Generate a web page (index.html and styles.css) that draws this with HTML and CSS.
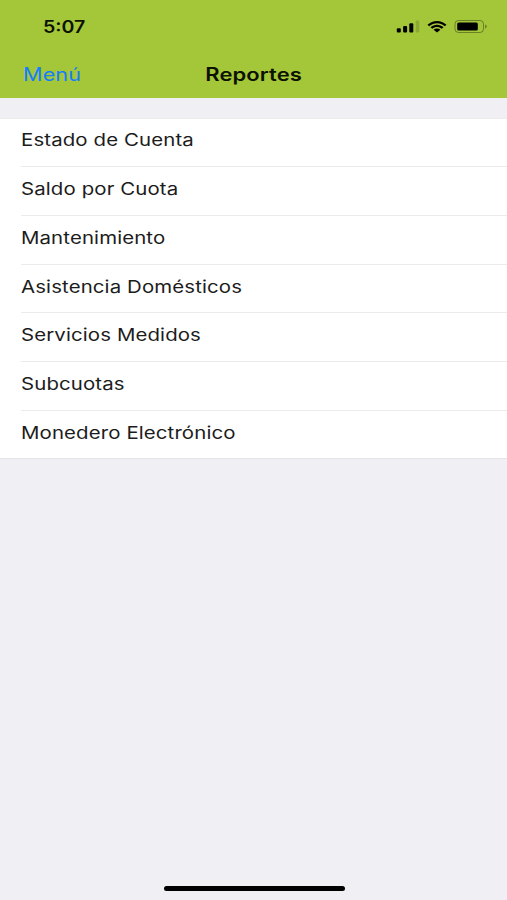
FILE: index.html
```html
<!DOCTYPE html>
<html lang="es">
  <head>
    <meta charset="UTF-8" />
    <meta name="viewport" content="width=device-width, initial-scale=1.0" />
    <title>Reportes</title>
    <link rel="stylesheet" href="styles.css">
  </head>
  <body>
    <header class="header">
      <div class="status-bar">
        <span class="time"><span class="label">5:07</span></span>
        <div class="status-icons">
          <svg class="signal" width="24" height="13" viewBox="0 0 24 13">
            <rect x="0.8" y="8.2" width="4" height="4.2" rx="1" />
            <rect x="7.1" y="6" width="4" height="6.4" rx="1" />
            <rect x="13.3" y="3.2" width="4" height="9.2" rx="1" />
            <rect x="19.7" y="0.6" width="3.6" height="11.8" rx="1" opacity="0.15" />
          </svg>
          <svg class="wifi" width="20" height="13" viewBox="0 0 20 12">
            <path d="M0.5 4.2C5.8-0.9 14.2-0.9 19.5 4.2L17.8 5.7C13.4 1.6 6.6 1.6 2.2 5.7Z" />
            <path d="M3.5 6.8C7.1 3.4 12.9 3.4 16.5 6.8L14.7 8.3C12 5.9 8 5.9 5.3 8.3Z" />
            <path d="M6.6 9.3C8.4 7.7 11.6 7.7 13.4 9.3L10 12Z" />
          </svg>
          <svg class="battery" width="34" height="13" viewBox="0 0 34 13">
            <rect x="1" y="0.5" width="28.5" height="12" rx="3.5" fill="none" stroke="#000" stroke-opacity="0.35" />
            <rect x="3.2" y="2.5" width="20.6" height="8" rx="1.5" />
            <path d="M31 4.5C33.3 5 33.3 8 31 8.5Z" opacity="0.35" />
          </svg>
        </div>
      </div>
      <nav class="nav-bar">
        <a href="#" class="back"><span class="label">Menú</span></a>
        <h1 class="title"><span class="label">Reportes</span></h1>
      </nav>
    </header>

    <ul class="list">
      <li><span class="label">Estado de Cuenta</span></li>
      <li><span class="label">Saldo por Cuota</span></li>
      <li><span class="label">Mantenimiento</span></li>
      <li><span class="label">Asistencia Domésticos</span></li>
      <li><span class="label">Servicios Medidos</span></li>
      <li><span class="label">Subcuotas</span></li>
      <li><span class="label">Monedero Electrónico</span></li>
    </ul>

    <div class="home-indicator"></div>
  </body>
</html>
```
FILE: styles.css
```css
* {
  box-sizing: border-box;
}

body {
  display: flex;
  flex-direction: column;
  height: 900px;
  margin: 0;
  background-color: #efeff4;
  font-family: Inter, "Liberation Sans", sans-serif;
  font-size: 17px;
  color: #1c1c1c;
}

.label {
  display: inline-block;
  letter-spacing: 0.1px;
  transform: scaleX(1.2);
  transform-origin: left center;
  white-space: nowrap;
}

.header {
  height: 98px;
  background-color: #a4c639;
}

.status-bar {
  display: flex;
  justify-content: space-between;
  height: 50px;
  padding: 16px 19px 0 43px;
}

.time {
  font-size: 17px;
  font-weight: 600;
  line-height: 22px;
  color: #0c1200;
}

.time .label {
  letter-spacing: 0;
  transform: scaleX(1.15);
}

.status-icons {
  display: flex;
  align-items: center;
  gap: 7px;
  height: 21px;
}

.nav-bar {
  display: grid;
  grid-template-columns: 1fr auto 1fr;
  align-items: center;
  height: 48px;
  padding: 1px 23px 0;
}

.back {
  font-size: 18px;
  color: #157efb;
  text-decoration: none;
}

.title {
  margin: 0;
  font-size: 18px;
  font-weight: 600;
  color: #0c1200;
}

.title .label {
  transform: scaleX(1.22);
  transform-origin: center;
}

.list {
  margin: 20px 0 0;
  padding: 0;
  list-style: none;
  background-color: #fff;
  border-top: 1px solid #ececef;
  border-bottom: 1px solid #e4e4e8;
}

.list li {
  height: 48.75px;
  margin-left: 21px;
  line-height: 45px;
  border-bottom: 1px solid #ebebed;
}

.list li:first-child {
  height: 48px;
  line-height: 43px;
}

.list li:last-child {
  height: 47.5px;
  border-bottom: 0;
}

.home-indicator {
  width: 181px;
  height: 5px;
  margin: auto auto 9px;
  border-radius: 3px;
  background-color: #000;
  transform: translateX(1px);
}
```
